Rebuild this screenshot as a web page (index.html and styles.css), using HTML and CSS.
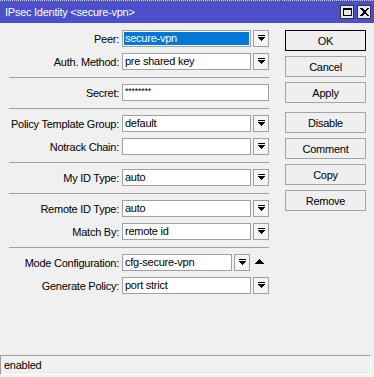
FILE: index.html
```html
<!DOCTYPE html>
<html lang="en">
<head>
    <meta charset="UTF-8">
    <title>IPsec Identity &lt;secure-vpn&gt;</title>
    <link rel="stylesheet" href="styles.css">
</head>
<body>
    <div class="window">
        <div class="titlebar">
            <span class="title">IPsec Identity &lt;secure-vpn&gt;</span>
            <span class="tb-btn"><span class="max-box"></span></span>
            <span class="tb-btn">
                <svg width="9" height="8" viewBox="0 0 9 8" shape-rendering="crispEdges"><path d="M0 0h2l2.5 2.5L7 0h2L5.5 4 9 8H7L4.5 5.5 2 8H0l3.5-4z" fill="#000"/></svg>
            </span>
        </div>

        <div class="content">
            <!-- campos -->
            <div class="form">
                <div class="group">
                    <div class="row">
                        <label>Peer:</label>
                        <div class="field selected">secure-vpn</div>
                        <span class="drop"><svg width="7" height="7" viewBox="0 0 7 7" shape-rendering="crispEdges"><path d="M0 0h7v1H0zM0 2h7L3.5 6z" fill="#000"/></svg></span>
                    </div>
                    <div class="row">
                        <label>Auth. Method:</label>
                        <div class="field">pre shared key</div>
                        <span class="drop"><svg width="7" height="7" viewBox="0 0 7 7" shape-rendering="crispEdges"><path d="M0 0h7v1H0zM0 2h7L3.5 6z" fill="#000"/></svg></span>
                    </div>
                </div>
                <div class="sep"></div>
                <div class="group">
                    <div class="row">
                        <label>Secret:</label>
                        <div class="field secret">********</div>
                    </div>
                </div>
                <div class="sep"></div>
                <div class="group">
                    <div class="row">
                        <label>Policy Template Group:</label>
                        <div class="field">default</div>
                        <span class="drop"><svg width="7" height="7" viewBox="0 0 7 7" shape-rendering="crispEdges"><path d="M0 0h7v1H0zM0 2h7L3.5 6z" fill="#000"/></svg></span>
                    </div>
                    <div class="row">
                        <label>Notrack Chain:</label>
                        <div class="field"></div>
                        <span class="drop"><svg width="7" height="7" viewBox="0 0 7 7" shape-rendering="crispEdges"><path d="M0 0h7v1H0zM0 2h7L3.5 6z" fill="#000"/></svg></span>
                    </div>
                </div>
                <div class="sep"></div>
                <div class="group">
                    <div class="row">
                        <label>My ID Type:</label>
                        <div class="field">auto</div>
                        <span class="drop"><svg width="7" height="7" viewBox="0 0 7 7" shape-rendering="crispEdges"><path d="M0 0h7v1H0zM0 2h7L3.5 6z" fill="#000"/></svg></span>
                    </div>
                </div>
                <div class="sep"></div>
                <div class="group">
                    <div class="row">
                        <label>Remote ID Type:</label>
                        <div class="field">auto</div>
                        <span class="drop"><svg width="7" height="7" viewBox="0 0 7 7" shape-rendering="crispEdges"><path d="M0 0h7v1H0zM0 2h7L3.5 6z" fill="#000"/></svg></span>
                    </div>
                    <div class="row">
                        <label>Match By:</label>
                        <div class="field">remote id</div>
                        <span class="drop"><svg width="7" height="7" viewBox="0 0 7 7" shape-rendering="crispEdges"><path d="M0 0h7v1H0zM0 2h7L3.5 6z" fill="#000"/></svg></span>
                    </div>
                </div>
                <div class="sep"></div>
                <div class="group">
                    <div class="row">
                        <label>Mode Configuration:</label>
                        <div class="field">cfg-secure-vpn</div>
                        <span class="drop"><svg width="7" height="7" viewBox="0 0 7 7" shape-rendering="crispEdges"><path d="M0 0h7v1H0zM0 2h7L3.5 6z" fill="#000"/></svg></span>
                        <span class="up"><svg width="9" height="5" viewBox="0 0 9 5" shape-rendering="crispEdges"><path d="M0 5h9L4.5 0z" fill="#000"/></svg></span>
                    </div>
                    <div class="row">
                        <label>Generate Policy:</label>
                        <div class="field">port strict</div>
                        <span class="drop"><svg width="7" height="7" viewBox="0 0 7 7" shape-rendering="crispEdges"><path d="M0 0h7v1H0zM0 2h7L3.5 6z" fill="#000"/></svg></span>
                    </div>
                </div>
            </div>

            <!-- botões -->
            <div class="buttons">
                <button class="default">OK</button>
                <button>Cancel</button>
                <button>Apply</button>
                <button class="spaced">Disable</button>
                <button>Comment</button>
                <button>Copy</button>
                <button>Remove</button>
            </div>
        </div>

        <div class="status">enabled</div>
    </div>
</body>
</html>
```

FILE: styles.css
```css
* {
    box-sizing: border-box;
}
body {
    margin: 0;
    font-family: "Liberation Sans", Arial, sans-serif;
    font-size: 11px;
    letter-spacing: -0.25px;
    color: #000;
    background: #f0f0f0;
}
.window {
    width: 374px;
    height: 377px;
    display: flex;
    flex-direction: column;
    background: #f0f0f0;
}
.titlebar {
    height: 23px;
    border-top: 1px solid #888;
    border-image: repeating-linear-gradient(90deg, #666 0 1px, #ccc 1px 2px) 1;
    background: #4b4fc9;
    display: flex;
    align-items: center;
    padding: 0 3px 0 5px;
    gap: 3px;
}
.title {
    flex: 1;
    color: #fff;
    font-size: 11px;
}
.tb-btn {
    width: 14px;
    height: 14px;
    border: 1px solid #333;
    background: #e8e8e8;
    display: flex;
    align-items: center;
    justify-content: center;
}
.max-box {
    width: 9px;
    height: 8px;
    border: 1px solid #000;
    border-top-width: 2px;
}
.content {
    flex: 1;
    display: flex;
}
.form {
    width: 269px;
    padding: 7px 0 0 9px;
}
.group {
    display: flex;
    flex-direction: column;
    gap: 6px;
}
.row {
    display: flex;
    align-items: center;
    height: 17px;
}
.row label {
    width: 110px;
    flex-shrink: 0;
    text-align: right;
    white-space: nowrap;
    margin-right: 3px;
}
.field {
    flex: 1;
    min-width: 0;
    height: 17px;
    line-height: 15px;
    border: 1px solid #a0a0a0;
    background: #fff;
    padding: 0 2px;
    white-space: nowrap;
    overflow: hidden;
}
.field.selected {
    background: #0078d7;
    color: #fff;
    box-shadow: inset 0 0 0 1px #fff;
}
.field.secret {
    font-size: 9px;
    line-height: 12px;
}
.drop {
    width: 16px;
    height: 17px;
    flex-shrink: 0;
    margin-left: 2px;
    border: 1px solid #a0a0a0;
    background: #f4f4f4;
    display: flex;
    align-items: center;
    justify-content: center;
}
.up {
    width: 19px;
    flex-shrink: 0;
    display: flex;
    justify-content: center;
    padding-bottom: 2px;
}
.sep {
    height: 1px;
    background: #a0a0a0;
    margin: 7px 0 6px;
}
.buttons {
    padding: 7px 0 0 16px;
    display: flex;
    flex-direction: column;
    gap: 5px;
}
.buttons button {
    width: 81px;
    height: 21px;
    font-family: "Liberation Sans", Arial, sans-serif;
    font-size: 11px;
    letter-spacing: -0.25px;
    color: #000;
    background: #efefef;
    border: 1px solid #a5a5a5;
    padding: 0;
}
.buttons button.default {
    border-color: #000;
}
.buttons button.spaced {
    margin-top: 4px;
}
.status {
    height: 20px;
    margin: 0 3px 2px 0;
    border-top: 1px solid #a0a0a0;
    border-left: 1px solid #a0a0a0;
    border-right: 1px solid #fff;
    border-bottom: 1px solid #fff;
    line-height: 18px;
    padding-left: 3px;
}
```
